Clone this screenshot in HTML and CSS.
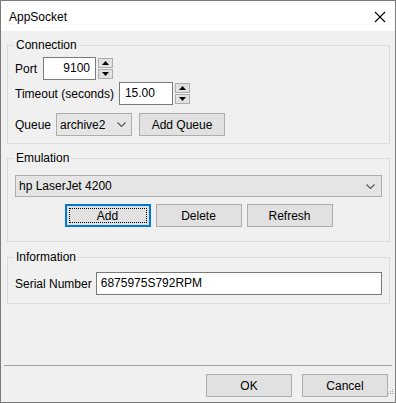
FILE: index.html
```html
<!DOCTYPE html>
<html>
<head>
<meta charset="utf-8">
<link rel="stylesheet" href="styles.css">
</head>
<body>
<div class="window">
  <div class="titlebar">
    <span class="title">AppSocket</span>
    <svg class="close" width="12" height="12" viewBox="0 0 12 12"><path d="M1 1 L11 11 M11 1 L1 11" stroke="#000" stroke-width="1.1" fill="none"/></svg>
  </div>
  <div class="content">
    <fieldset class="group g-conn">
      <legend>Connection</legend>
      <div class="row r-port">
        <span class="lbl">Port</span>
        <div class="input num port">9100</div>
        <div class="spin"><div class="sb"><svg width="7" height="4" viewBox="0 0 7 4"><path d="M0 4 L3.5 0 L7 4Z" fill="#000"/></svg></div><div class="sb"><svg width="7" height="4" viewBox="0 0 7 4"><path d="M0 0 L3.5 4 L7 0Z" fill="#000"/></svg></div></div>
      </div>
      <div class="row r-time">
        <span class="lbl">Timeout (seconds)</span>
        <div class="input timeout">15.00</div>
        <div class="spin"><div class="sb"><svg width="7" height="4" viewBox="0 0 7 4"><path d="M0 4 L3.5 0 L7 4Z" fill="#000"/></svg></div><div class="sb"><svg width="7" height="4" viewBox="0 0 7 4"><path d="M0 0 L3.5 4 L7 0Z" fill="#000"/></svg></div></div>
      </div>
      <div class="row r-queue">
        <span class="lbl">Queue</span>
        <div class="combo queue"><span>archive2</span><svg width="9" height="5" viewBox="0 0 9 5"><path d="M0.5 0.5 L4.5 4.5 L8.5 0.5" stroke="#555" stroke-width="1.1" fill="none"/></svg></div>
        <div class="btn addq">Add Queue</div>
      </div>
    </fieldset>
    <fieldset class="group g-emu">
      <legend>Emulation</legend>
      <div class="combo emu"><span>hp LaserJet 4200</span><svg width="9" height="5" viewBox="0 0 9 5"><path d="M0.5 0.5 L4.5 4.5 L8.5 0.5" stroke="#555" stroke-width="1.1" fill="none"/></svg></div>
      <div class="btnrow">
        <div class="btn default"><span class="focus">Add</span></div>
        <div class="btn">Delete</div>
        <div class="btn">Refresh</div>
      </div>
    </fieldset>
    <fieldset class="group g-info">
      <legend>Information</legend>
      <div class="row">
        <span class="lbl">Serial Number</span>
        <div class="input serial">6875975S792RPM</div>
      </div>
    </fieldset>
    <div class="footer">
      <div class="sep"></div>
      <div class="footbtns">
        <div class="btn">OK</div>
        <div class="btn">Cancel</div>
      </div>
    </div>
    <svg class="grip" width="7" height="7" viewBox="0 0 7 7">
      <rect x="5" y="0" width="1" height="1" fill="#a0a0a0"/>
      <rect x="3" y="2" width="1" height="1" fill="#a0a0a0"/>
      <rect x="5" y="2" width="1" height="1" fill="#a0a0a0"/>
      <rect x="1" y="4" width="1" height="1" fill="#a0a0a0"/>
      <rect x="3" y="4" width="1" height="1" fill="#a0a0a0"/>
      <rect x="5" y="4" width="1" height="1" fill="#a0a0a0"/>
    </svg>
  </div>
</div>
</body>
</html>
```

FILE: styles.css
```css
* { box-sizing: border-box; }
html, body { margin: 0; padding: 0; background: #fff; }
body {
  font-family: "Liberation Sans", Arial, sans-serif;
  font-size: 12px;
  color: #000;
}
.window {
  width: 396px;
  height: 403px;
  border: 1px solid #7a7a7a;
  display: flex;
  flex-direction: column;
  position: relative;
  background: #f0f0f0;
}
.titlebar {
  height: 30px;
  background: #fff;
  display: flex;
  align-items: center;
  justify-content: space-between;
  padding: 0 9px 0 8px;
  flex: none;
}
.title { font-size: 12px; line-height: 14px; margin-top: 1px; }
.close { margin-right: 0; margin-top: 1px; }
.content {
  flex: 1;
  display: flex;
  flex-direction: column;
  background: #f0f0f0;
}
.group {
  border: 1px solid #dcdcdc;
  margin: 6px 5px 0 6px;
  padding: 4px 7px 7px 7px;
  min-width: 0;
}
.group legend {
  padding: 0 2px;
  margin-left: -1px;
  line-height: 16px;
  font-size: 12px;
}
.g-emu { padding-top: 9px; padding-bottom: 14px; }
.g-info { margin-top: 7px; padding-top: 7px; padding-bottom: 8px; }
.row {
  display: flex;
  align-items: center;
  height: 23px;
}
.r-port { margin-bottom: 2px; }
.r-time { margin-bottom: 8px; }
.lbl { white-space: nowrap; }
.input {
  height: 23px;
  border: 1px solid #7a7a7a;
  background: #fff;
  line-height: 21px;
  padding: 0 4px;
  white-space: nowrap;
}
.port { width: 53px; margin-left: 6px; text-align: right; padding-right: 5px; }
.timeout { width: 54px; margin-left: 5px; padding-left: 5px; }
.serial { flex: 1; margin-left: 4px; padding-left: 4px; }
.spin {
  display: flex;
  flex-direction: column;
  gap: 1px;
  margin-left: 2px;
}
.sb {
  width: 15px;
  height: 10px;
  background: #e1e1e1;
  border: 1px solid #adadad;
  display: flex;
  align-items: center;
  justify-content: center;
}
.combo {
  height: 23px;
  border: 1px solid #adadad;
  background: #e5e5e5;
  display: flex;
  align-items: center;
  justify-content: space-between;
  padding: 0 5px 0 3px;
  white-space: nowrap;
}
.queue { width: 76px; margin-left: 5px; }
.emu { height: 22px; padding-right: 6px; }
.btn {
  height: 23px;
  width: 86px;
  border: 1px solid #adadad;
  background: #e1e1e1;
  display: flex;
  align-items: center;
  justify-content: center;
  white-space: nowrap;
}
.addq { margin-left: 7px; }
.btnrow {
  display: flex;
  justify-content: center;
  gap: 5px;
  margin-top: 7px;
}
.btn.default {
  border: 1px solid #0078d7;
  box-shadow: inset 0 0 0 1px #0078d7;
  padding: 3px;
}
.focus {
  flex: 1;
  align-self: stretch;
  display: flex;
  align-items: center;
  justify-content: center;
  outline: 1px dotted #000;
  outline-offset: -1px;
}
.footer {
  margin-top: auto;
  display: flex;
  flex-direction: column;
}
.sep {
  height: 1px;
  background: #a0a0a0;
  margin: 0 3px;
}
.footbtns {
  display: flex;
  justify-content: flex-end;
  gap: 10px;
  padding: 8px 7px 5px 0;
}
.grip {
  position: absolute;
  right: 1px;
  bottom: 6px;
}
```
